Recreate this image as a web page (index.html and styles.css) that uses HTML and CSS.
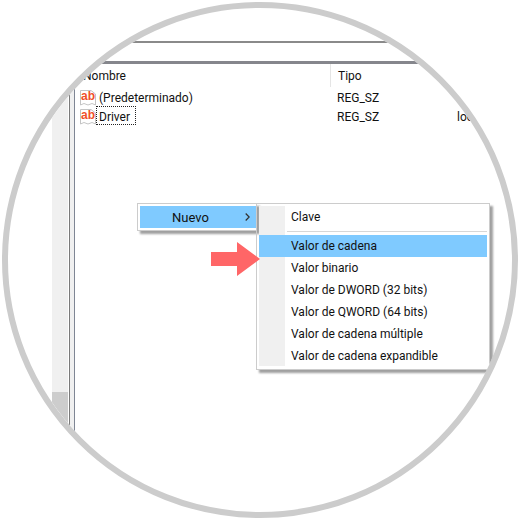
FILE: index.html
```html
<!DOCTYPE html>
<html lang="es">
<head>
    <meta charset="UTF-8">
    <title>Editor del Registro</title>
    <link rel="stylesheet" href="styles.css">
</head>
<body>
    <div class="lens">
        <div class="address-bar"></div>

        <div class="panes">
            <div class="tree">
                <div class="scrollbar"><div class="thumb"></div></div>
                <div class="tree-edge"></div>
            </div>

            <div class="list">
                <div class="list-head">
                    <div class="col-name">Nombre</div>
                    <div class="col-type">Tipo</div>
                </div>
                <div class="row">
                    <div class="col-name">
                        <svg class="ab-icon" viewBox="0 0 16 16"><path d="M.5.5H11L15.500 4V15L12 13.500 8 15 4 13.500 .5 15Z" fill="#fff" stroke="#c4c4c4"/><text class="ab-text" x="1" y="10">ab</text></svg>
                        <span class="value-name">(Predeterminado)</span>
                    </div>
                    <div class="col-type">REG_SZ</div>
                </div>
                <div class="row">
                    <div class="col-name">
                        <svg class="ab-icon" viewBox="0 0 16 16"><path d="M.5.5H11L15.500 4V15L12 13.500 8 15 4 13.500 .5 15Z" fill="#fff" stroke="#c4c4c4"/><text class="ab-text" x="1" y="10">ab</text></svg>
                        <span class="value-name selected">Driver</span>
                    </div>
                    <div class="col-type">REG_SZ</div>
                    <div class="col-data">loc</div>
                </div>
            </div>
        </div>

        <div class="menu parent-menu">
            <div class="parent-item">
                <span>Nuevo</span>
                <svg class="chevron" viewBox="0 0 5 8"><path d="M.7.5L4.200 4 .7 7.500" fill="none" stroke="#333" stroke-width="1.300"/></svg>
            </div>
        </div>

        <div class="menu sub-menu">
            <div class="sub-item">Clave</div>
            <div class="sub-separator"></div>
            <div class="sub-item active">Valor de cadena</div>
            <div class="sub-item">Valor binario</div>
            <div class="sub-item">Valor de DWORD (32 bits)</div>
            <div class="sub-item">Valor de QWORD (64 bits)</div>
            <div class="sub-item">Valor de cadena múltiple</div>
            <div class="sub-item">Valor de cadena expandible</div>
        </div>

        <svg class="arrow" viewBox="0 0 49 34"><path d="M0 10H26V0L49 17 26 34V24H0Z" fill="#ff6667"/></svg>
    </div>
</body>
</html>
```

FILE: styles.css
```css
* {
    margin: 0;
    padding: 0;
    box-sizing: border-box;
}

body {
    width: 520px;
    height: 520px;
    background: white;
    font-family: Roboto, 'Noto Sans', sans-serif;
    font-size: 12px;
    color: #111;
    overflow: hidden;
    padding: 2px;
}

.lens {
    position: relative;
    width: 516px;
    height: 516px;
    border: 6px solid #cccccc;
    border-radius: 50%;
    overflow: hidden;
    background: white;
    display: flex;
    flex-direction: column;
}

.address-bar {
    flex: none;
    height: 23px;
    margin-top: 33px;
    border-top: 2px solid #8a8a8a;
    border-bottom: 3px solid #85868c;
}

.panes {
    flex: 1;
    display: flex;
}

.tree {
    flex: none;
    width: 72px;
    padding-left: 44px;
    display: flex;
    gap: 1px;
}

.scrollbar {
    width: 16px;
    flex: none;
    background: #f0f0f0;
    display: flex;
    flex-direction: column;
    justify-content: flex-end;
}

.thumb {
    height: 120px;
    background: #cdcdcd;
}

.tree-edge {
    width: 6px;
    flex: none;
    background: #f0f0f0;
    border-left: 1px solid #7a7a7a;
    border-right: 1px solid #7f8694;
}

.list {
    flex: 1;
}

.list-head {
    display: flex;
    height: 23px;
    align-items: center;
}

.col-name {
    width: 250px;
    display: flex;
    align-items: center;
}

.list-head .col-name {
    padding: 1px 0 0 3px;
}

.col-type {
    width: 127px;
    padding: 2px 0 0 7px;
}

.list-head .col-type {
    border-left: 1px solid #e5e5e5;
    height: 100%;
    padding-top: 0;
    display: flex;
    align-items: center;
}

.col-data {
    padding-top: 2px;
}

.row {
    display: flex;
    height: 19px;
    align-items: center;
}

.ab-icon {
    width: 16px;
    height: 16px;
    margin-top: 2px;
    flex: none;
}

.ab-text {
    font-family: 'Liberation Sans', sans-serif;
    font-size: 12px;
    font-weight: 700;
    fill: #f0502a;
}

.value-name {
    padding: 3px 5px 0 2px;
    border: 1px dotted transparent;
    line-height: 14px;
}

.value-name.selected {
    border-color: #222;
}

.menu {
    position: absolute;
    background: white;
    border: 1px solid #cccccc;
}

.parent-menu {
    left: 129px;
    top: 195px;
    width: 120px;
    height: 28px;
    padding: 2px 0 2px 2px;
    box-shadow: 3px 3px 2px #a0a0a0;
}

.parent-item {
    height: 22px;
    background: #7fcaff;
    display: flex;
    align-items: center;
    padding-left: 32px;
    position: relative;
    font-size: 13px;
}

.chevron {
    position: absolute;
    right: 6px;
    top: 7px;
    width: 5px;
    height: 8px;
}

.sub-menu {
    left: 248px;
    top: 195px;
    width: 234px;
    height: 167px;
    padding: 2px 2px 3px 2px;
    box-shadow: 3px 3px 2px #a0a0a0;
    background: linear-gradient(to right, #f0f0f0 28px, white 28px);
    background-clip: content-box;
}

.sub-item {
    height: 22px;
    line-height: 23px;
    padding-left: 32px;
}

.sub-item.active {
    background: #7fcaff;
}

.sub-separator {
    height: 1px;
    margin: 3px 0 3px 28px;
    background: #d7d7d7;
}

.arrow {
    position: absolute;
    left: 203px;
    top: 234px;
    width: 49px;
    height: 34px;
}
```
